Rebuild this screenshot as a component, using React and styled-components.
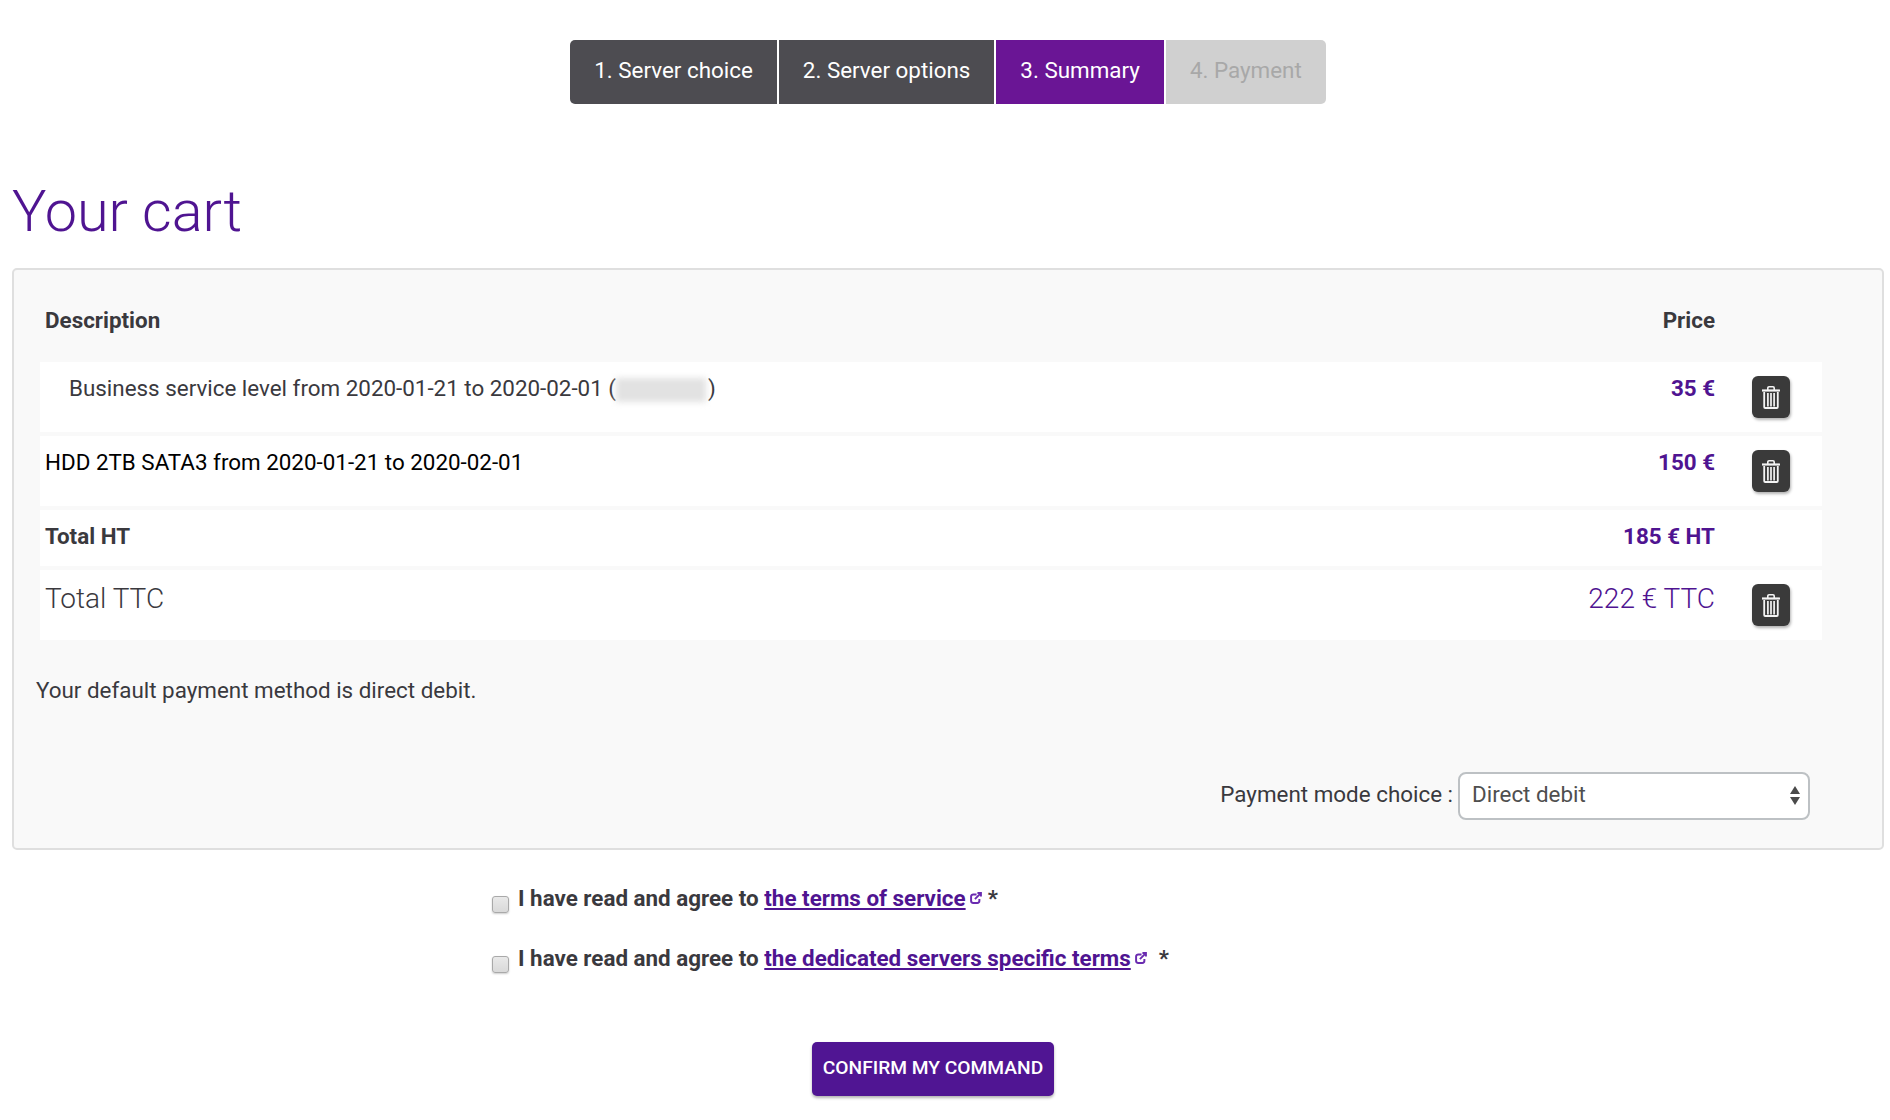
import React from "react";
import styled, { createGlobalStyle } from "styled-components";

const GlobalStyle = createGlobalStyle`
  html, body {
    margin: 0;
    padding: 0;
    background: #fff;
  }
  body {
    font-family: Roboto, "Liberation Sans", sans-serif;
    font-size: 22.4px;
    line-height: 33px;
    color: #3a393e;
  }
`;

const Page = styled.div`
  padding: 40px 6px 24px 12px;
`;

const Stepper = styled.nav`
  display: flex;
  justify-content: center;
  gap: 2px;
`;

const stepColors = {
  done: { bg: "#4d4c51", fg: "#fff" },
  active: { bg: "#6a1595", fg: "#fff" },
  todo: { bg: "#d0d0d0", fg: "#a8a8a8" },
};

const Step = styled.a`
  display: block;
  height: 64px;
  line-height: 60px;
  padding: 0 24px;
  font-size: 22.4px;
  background: ${(p) => stepColors[p.$state].bg};
  color: ${(p) => stepColors[p.$state].fg};
  &:first-child {
    border-radius: 5px 0 0 5px;
  }
  &:last-child {
    border-radius: 0 5px 5px 0;
  }
`;

const Title = styled.h1`
  margin: 72px 0 20px;
  font-size: 57.6px;
  line-height: 72px;
  font-weight: 300;
  color: #4f1491;
`;

const Panel = styled.section`
  border: 2px solid #dfdfdf;
  border-radius: 5px;
  background: #f9f9f9;
  padding: 34px 72px 28px 22px;
`;

const Cart = styled.div`
  display: flex;
  flex-direction: column;
  gap: 4px;
  margin: 0 -12px 0 4px;
`;

const HeadRow = styled.div`
  display: flex;
  padding: 0 107px 21px 5px;
  font-weight: 700;
  justify-content: space-between;
`;

const Row = styled.div`
  display: flex;
  align-items: flex-start;
  background: #fff;
  height: ${(p) => p.$height || 70}px;
  padding-left: 5px;
  box-sizing: border-box;
`;

const Label = styled.div`
  flex: 1;
  padding-top: 10px;
  padding-left: ${(p) => (p.$indent ? 24 : 0)}px;
  color: ${(p) => (p.$black ? "#000" : "#3a393e")};
  font-weight: ${(p) => (p.$bold ? 700 : 400)};
`;

const BigLabel = styled.div`
  flex: 1;
  padding-top: 11px;
  font-size: 28px;
  line-height: 36px;
  font-weight: 300;
`;

const Amount = styled.div`
  padding-top: 10px;
  font-weight: 700;
  color: #4f1491;
`;

const BigAmount = styled.div`
  padding-top: 11px;
  font-size: 28px;
  line-height: 36px;
  font-weight: 300;
  color: #4f1491;
`;

const Actions = styled.div`
  width: 107px;
  flex: none;
  padding: 14px 0 0 37px;
  box-sizing: border-box;
`;

const TrashButton = styled.button`
  display: flex;
  align-items: center;
  justify-content: center;
  width: 38px;
  height: 42px;
  padding: 0;
  border: 0;
  border-radius: 6px;
  background: #3a3a3a;
  box-shadow: 1px 2px 3px rgba(0, 0, 0, 0.3);
`;

const Redacted = styled.span`
  display: inline-block;
  width: 90px;
  height: 24px;
  margin-right: 2px;
  vertical-align: -6px;
  background: #e2e2e2;
  filter: blur(3px);
`;

const Note = styled.p`
  margin: 34px 0 0;
`;

const PaymentRow = styled.div`
  display: flex;
  align-items: center;
  justify-content: flex-end;
  gap: 5px;
  margin-top: 65px;
`;

const PaymentLabel = styled.span`
  padding-bottom: 4px;
`;

const SelectWrap = styled.div`
  position: relative;
  width: 352px;
  height: 48px;
`;

const Select = styled.select`
  appearance: none;
  width: 100%;
  height: 100%;
  box-sizing: border-box;
  padding: 0 12px 5px;
  border: 2px solid #bdc1c4;
  border-radius: 8px;
  background: #fff;
  font-family: Roboto, "Liberation Sans", sans-serif;
  font-size: 22.4px;
  color: #4f4f4f;
`;

const SelectArrows = styled.svg`
  position: absolute;
  top: 13px;
  right: 10px;
  pointer-events: none;
`;

const Terms = styled.div`
  display: flex;
  flex-direction: column;
  gap: 27px;
  margin-top: 32px;
  padding-left: 480px;
`;

const TermRow = styled.label`
  display: flex;
  align-items: flex-start;
  gap: 9px;
  font-weight: 700;
`;

const Check = styled.input`
  appearance: none;
  flex: none;
  width: 17px;
  height: 17px;
  margin: 14px 0 0;
  border: 1px solid #a9a9a9;
  border-radius: 3px;
  background: linear-gradient(#e9e9e9, #d9d9d9);
  box-shadow: 0 1px 2px rgba(0, 0, 0, 0.2);
`;

const TermLink = styled.a`
  color: #4f1491;
  text-decoration: underline;
`;

const External = styled.svg`
  margin: 0 ${(p) => p.$after}px 0 4px;
  vertical-align: 2px;
`;

const ConfirmRow = styled.div`
  margin-top: 67px;
  padding-left: 800px;
`;

const ConfirmButton = styled.button`
  width: 242px;
  height: 54px;
  padding: 0 0 3px;
  border: 0;
  border-radius: 5px;
  background: #501593;
  box-shadow: 0 2px 3px rgba(0, 0, 0, 0.3);
  color: #fff;
  font-family: Roboto, "Liberation Sans", sans-serif;
  font-size: 19.2px;
  font-weight: 500;
  text-transform: uppercase;
`;

const TrashIcon = () => (
  <svg width="18" height="23" viewBox="0 0 18 23" fill="none">
    <path d="M5.8 4V2a1.2 1.2 0 0 1 1.2-1.2h4A1.2 1.2 0 0 1 12.2 2v2" stroke="#f4f4f4" strokeWidth="1.6" />
    <path d="M0 4.5h18" stroke="#f4f4f4" strokeWidth="2.2" />
    <path d="M2.2 6v15A1 1 0 0 0 3.2 22h11.6a1 1 0 0 0 1-1V6" stroke="#f4f4f4" strokeWidth="1.8" />
    <path d="M5.9 7v13.5M9 7v13.5M12.1 7v13.5" stroke="#f4f4f4" strokeWidth="1.7" />
  </svg>
);

const ExternalIcon = ({ after }) => (
  <External $after={after} width="12" height="12" viewBox="0 0 11 11" fill="none" stroke="#6a2bb0" strokeWidth="1.8">
    <path d="M6 2.2H3A2 2 0 0 0 1 4.2v3.8a2 2 0 0 0 2 2h3.6a2 2 0 0 0 2-2V6.5" />
    <path d="M4.5 6.5 9.5 1.5M6.8 1h3.2v3.2" />
  </External>
);

export default function App() {
  return (
    <Page>
      <GlobalStyle />
      <Stepper>
        <Step $state="done">1. Server choice</Step>
        <Step $state="done">2. Server options</Step>
        <Step $state="active">3. Summary</Step>
        <Step $state="todo">4. Payment</Step>
      </Stepper>

      <Title>Your cart</Title>

      <Panel>
        <Cart>
          <HeadRow>
            <span>Description</span>
            <span>Price</span>
          </HeadRow>
          <Row>
            <Label $indent>
              Business service level from 2020-01-21 to 2020-02-01 (<Redacted />)
            </Label>
            <Amount>35 €</Amount>
            <Actions>
              <TrashButton aria-label="Remove"><TrashIcon /></TrashButton>
            </Actions>
          </Row>
          <Row>
            <Label $black>HDD 2TB SATA3 from 2020-01-21 to 2020-02-01</Label>
            <Amount>150 €</Amount>
            <Actions>
              <TrashButton aria-label="Remove"><TrashIcon /></TrashButton>
            </Actions>
          </Row>
          <Row $height={56}>
            <Label $bold>Total HT</Label>
            <Amount>185 € HT</Amount>
            <Actions />
          </Row>
          <Row>
            <BigLabel>Total TTC</BigLabel>
            <BigAmount>222 € TTC</BigAmount>
            <Actions>
              <TrashButton aria-label="Remove"><TrashIcon /></TrashButton>
            </Actions>
          </Row>
        </Cart>

        <Note>Your default payment method is direct debit.</Note>

        <PaymentRow>
          <PaymentLabel>Payment mode choice :</PaymentLabel>
          <SelectWrap>
            <Select defaultValue="debit">
              <option value="debit">Direct debit</option>
            </Select>
            <SelectArrows width="10" height="21" viewBox="0 0 10 21" fill="#4a4a4a">
              <path d="M5 1l5 8H0zM0 12h10l-5 8z" />
            </SelectArrows>
          </SelectWrap>
        </PaymentRow>
      </Panel>

      <Terms>
        <TermRow>
          <Check type="checkbox" />
          <span>
            I have read and agree to <TermLink>the terms of service</TermLink>
            <ExternalIcon after={6} />*
          </span>
        </TermRow>
        <TermRow>
          <Check type="checkbox" />
          <span>
            I have read and agree to <TermLink>the dedicated servers specific terms</TermLink>
            <ExternalIcon after={12} />*
          </span>
        </TermRow>
      </Terms>

      <ConfirmRow>
        <ConfirmButton>Confirm my command</ConfirmButton>
      </ConfirmRow>
    </Page>
  );
}
